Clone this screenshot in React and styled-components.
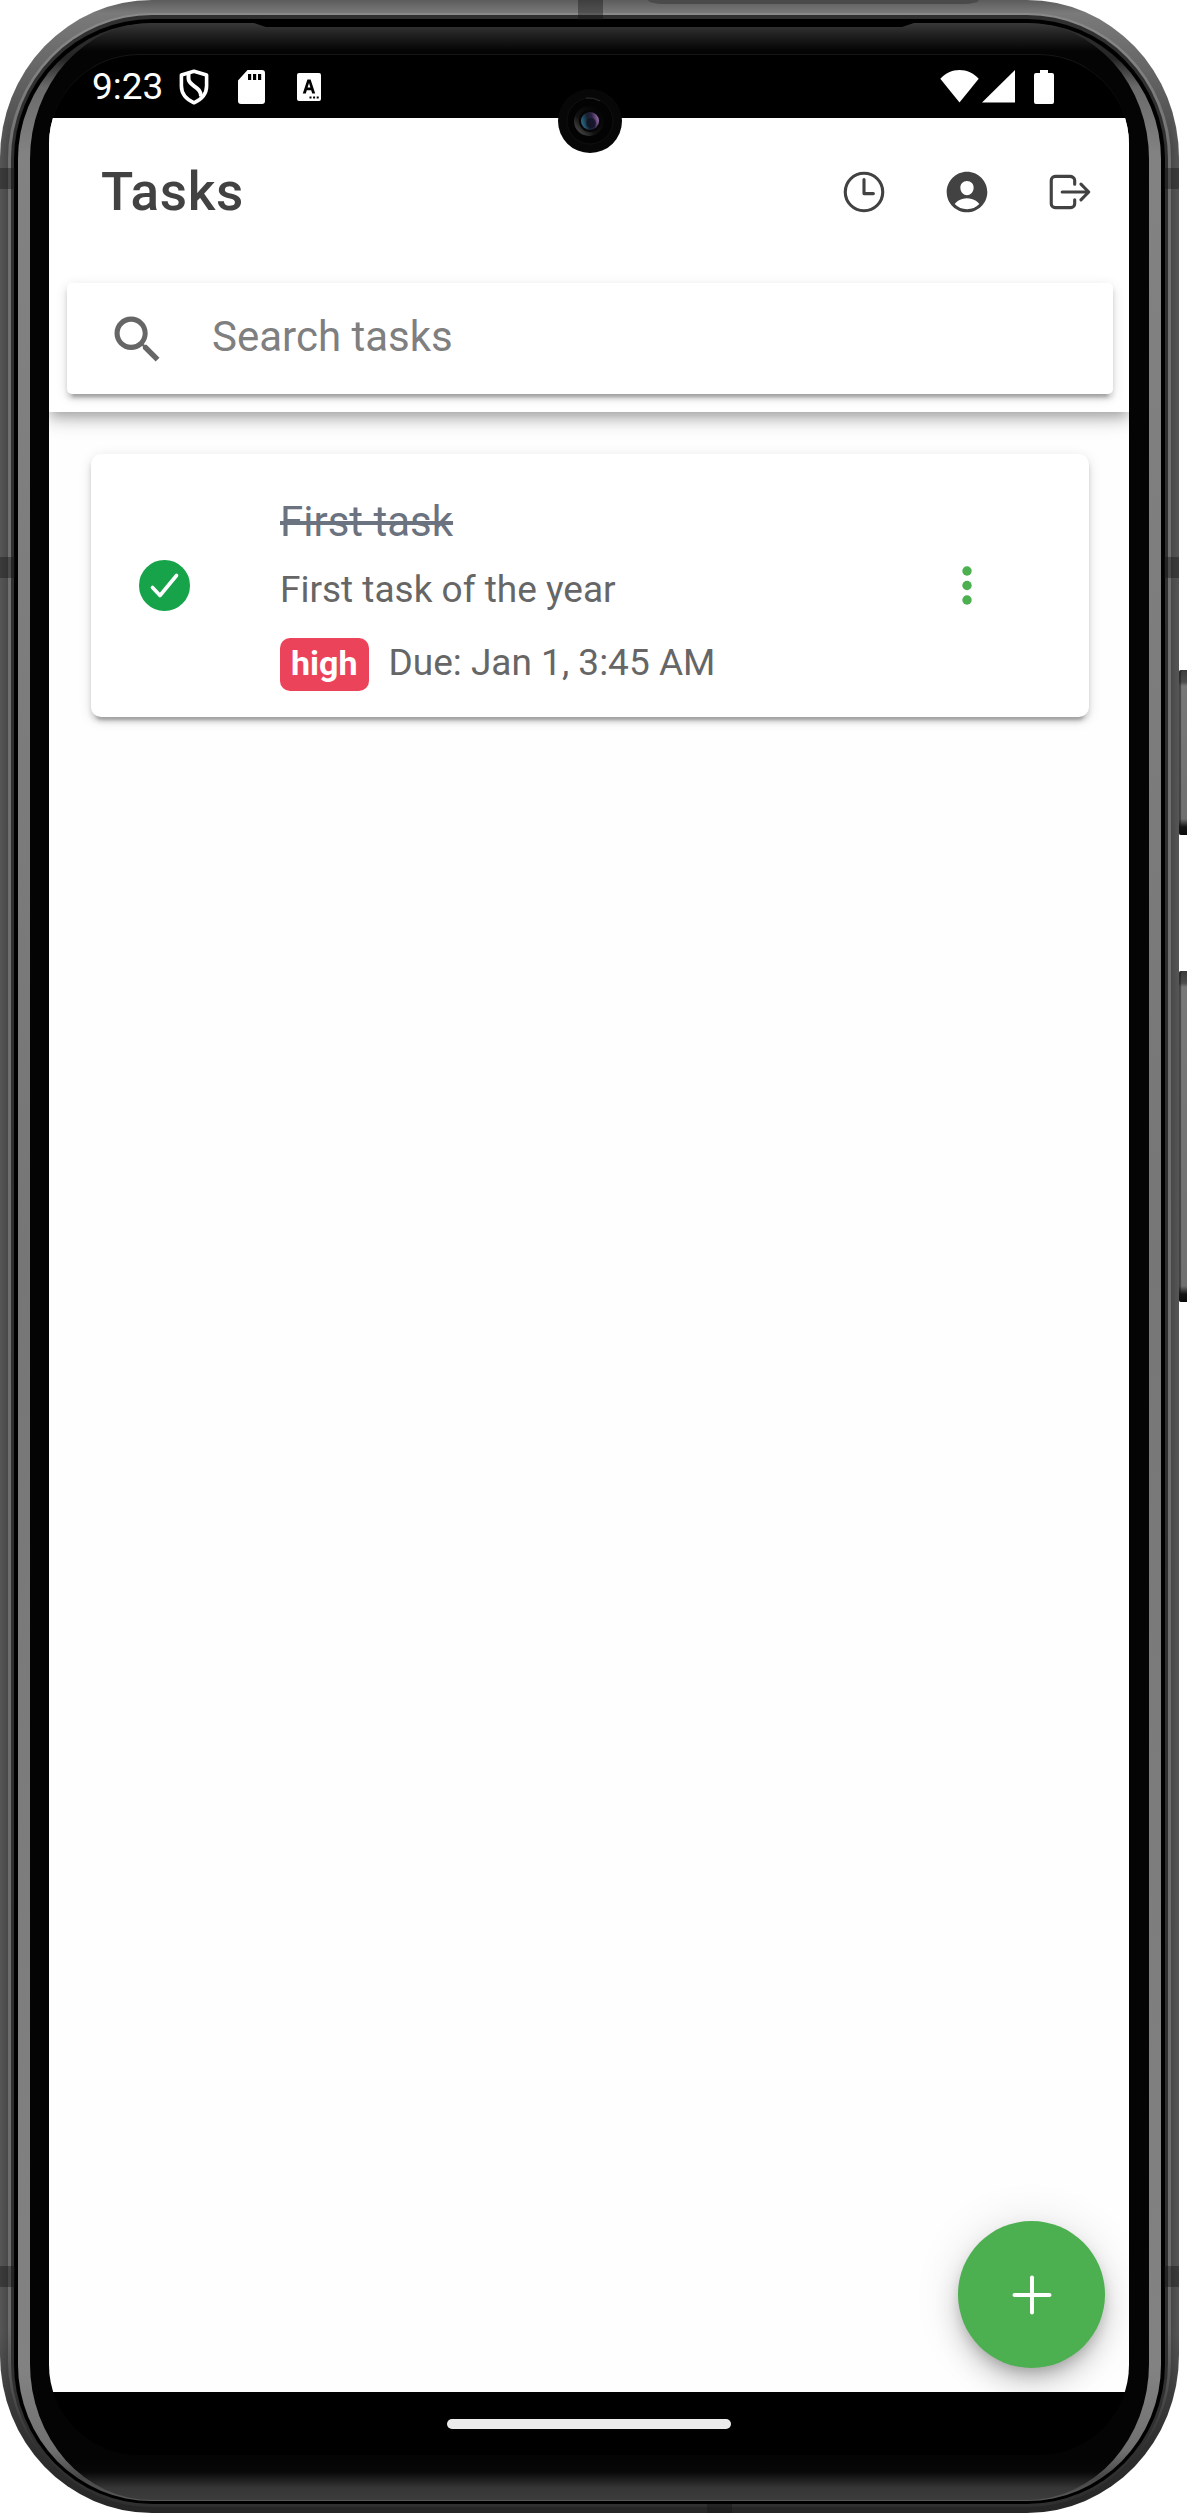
import React, { useState } from "react";
import styled, { createGlobalStyle, css } from "styled-components";
import { IoTimeOutline, IoPersonCircle, IoLogOutOutline } from "react-icons/io5";
import { IoMdSearch } from "react-icons/io";

const GlobalStyle = createGlobalStyle`
  *, *::before, *::after { box-sizing: border-box; }
  body {
    margin: 0;
    background: #fff;
    font-family: Roboto, "Liberation Sans", sans-serif;
  }
  button, input { font: inherit; }
`;

/* ---------- device ---------- */

const Stage = styled.div`
  display: flex;
  min-height: 100vh;
`;

const ring = css`
  display: flex;
  flex-direction: column;
  flex: 1;
`;

const Shell = styled.div`
  ${ring}
  position: relative;
  min-width: 0;
  padding: 13px 8px 6px;
  border-radius: 152px / 158px;
  overflow: hidden;
  background:
    linear-gradient(to bottom, #5c5c5c 0, #7a7a7a 13px, rgba(92, 92, 92, 0) 150px),
    linear-gradient(to top, #262626 0, #2e2e2e 60px, rgba(60, 60, 60, 0) 180px),
    linear-gradient(to right, #565656 0, #484848 8px, #484848 calc(100% - 8px), #565656 100%);
`;

const Highlight = styled.div`
  ${ring}
  padding: 2px 3px 0;
  border-radius: 144px / 146px;
  background: linear-gradient(to bottom, #8a8a8a 0, #707070 150px, #6c6c6c calc(100% - 180px), #2a2a2a calc(100% - 40px));
`;

const Groove = styled.div`
  ${ring}
  padding: 4px 3px 3px;
  border-radius: 141px / 144px;
  background: #303030;
`;

const Seam = styled.div`
  ${ring}
  padding: 4px 4px 3px;
  border-radius: 138px / 140px;
  background: #000;
`;

const Glass = styled.div`
  ${ring}
  padding: 0 12px 1px;
  border-radius: 134px / 136px;
  background: linear-gradient(
    to bottom,
    #303030 0,
    #262626 36px,
    #6a6a6a 64px,
    #828282 130px,
    #767676 50%,
    #828282 calc(100% - 130px),
    #707070 calc(100% - 50px),
    #484848 calc(100% - 24px),
    #585858 100%
  );
`;

const Bezel = styled.div`
  ${ring}
  position: relative;
  padding: 31px 20px 45px 19px;
  border-radius: 122px / 136px;
  background:
    linear-gradient(to bottom, #383838 0, #202020 12px, #040404 28px, rgba(4, 4, 4, 0) 29px),
    linear-gradient(to top, #3c3c3c 0, #363636 12px, #080808 28px, rgba(4, 4, 4, 0) 40px),
    #040404;
`;

const Earpiece = styled.div`
  position: absolute;
  top: 0;
  left: 20%;
  right: 21%;
  height: 4px;
  background: #000;
  clip-path: polygon(0 0, 100% 0, calc(100% - 12px) 100%, 12px 100%);
`;

const TopCap = styled.div`
  position: absolute;
  top: 0;
  left: 55%;
  right: 17%;
  height: 4px;
  border-radius: 0 0 16px 16px / 0 0 4px 4px;
  background: #4a4a4a;
`;

const Display = styled.div`
  ${ring}
  overflow: hidden;
  border-top: 1px solid #161616;
  border-radius: 90px;
  background: #000;
`;

const Band = styled.div`
  position: absolute;
  background: rgba(20, 20, 20, 0.4);
  ${({ $edge, $at }) => {
    if ($edge === "left" || $edge === "right") {
      return css`
        ${$edge}: 0;
        top: ${$at};
        width: 15px;
        height: 21px;
      `;
    }
    return css`
      ${$edge}: 0;
      left: ${$at};
      width: 25px;
      height: ${$edge === "top" ? "20px" : "9px"};
    `;
  }}
`;

const Camera = styled.div`
  position: absolute;
  top: 89px;
  left: 50%;
  display: grid;
  place-items: center;
  width: 64px;
  height: 64px;
  margin-left: -32px;
  border-radius: 50%;
  background: #070707;
`;

const ButtonRail = styled.div`
  display: flex;
  flex-direction: column;
  gap: 136px;
  width: 8px;
  padding-top: 670px;
`;

const SideKey = styled.div`
  height: ${({ $length }) => $length};
  border-radius: 2px 0 0 2px;
  background: linear-gradient(
    to bottom,
    #3c3c3c 0,
    #4c4c4c 12px,
    #787878 16px,
    #707070 calc(100% - 16px),
    #141414 calc(100% - 8px),
    #0a0a0a 100%
  );
  box-shadow: inset 2px 0 1px rgba(20, 20, 20, 0.5);
`;

/* ---------- system bars ---------- */

const StatusBar = styled.div`
  display: flex;
  justify-content: space-between;
  align-items: center;
  height: 63px;
  padding: 0 75px 0 43px;
  color: #fff;
`;

const StatusGroup = styled.div`
  display: flex;
  align-items: center;
`;

const Clock = styled.time`
  width: 87px;
  font-size: 37px;
  line-height: 44px;
`;

const StatusIcon = styled.svg`
  display: block;
  flex: none;
  margin-left: ${({ $gap }) => $gap || "0"};
  fill: currentColor;
`;

const NavBar = styled.div`
  display: flex;
  justify-content: center;
  align-items: center;
  height: 63px;
`;

const HomePill = styled.div`
  width: 284px;
  height: 10px;
  border-radius: 5px;
  background: #ebebeb;
`;

/* ---------- app ---------- */

const AppScreen = styled.div`
  ${ring}
  position: relative;
  background: #fefefe;
`;

const Header = styled.header`
  background: #fff;
  box-shadow:
    0 5px 10px -3px rgba(0, 0, 0, 0.2),
    0 10px 13px 0 rgba(0, 0, 0, 0.14),
    0 3px 26px 0 rgba(0, 0, 0, 0.12);
`;

const Toolbar = styled.div`
  display: flex;
  justify-content: space-between;
  align-items: center;
  height: 147px;
  padding: 0 8px 0 52px;
`;

const PageTitle = styled.h1`
  margin: 0;
  color: #424242;
  font-size: 53px;
  font-weight: 500;
  line-height: 62px;
  letter-spacing: 0.0125em;
`;

const Actions = styled.div`
  display: flex;
`;

const IconButton = styled.button`
  display: flex;
  justify-content: center;
  align-items: center;
  width: ${({ $width }) => $width || "103px"};
  height: 100px;
  padding: 0;
  border: 0;
  background: none;
  color: ${({ $color }) => $color || "#424242"};
  cursor: pointer;
`;

const SearchRow = styled.div`
  padding: 18px 16px 18px 18px;
`;

const SearchBox = styled.label`
  display: flex;
  align-items: center;
  gap: 45px;
  height: 111px;
  padding: 0 40px;
  border-radius: 5px;
  background: #fff;
  color: #666;
  box-shadow:
    0 8px 3px -5px rgba(0, 0, 0, 0.2),
    0 5px 5px 0 rgba(0, 0, 0, 0.14),
    0 3px 13px 0 rgba(0, 0, 0, 0.12);
`;

const SearchInput = styled.input`
  flex: 1;
  min-width: 0;
  padding: 0 0 4px;
  border: 0;
  outline: 0;
  background: none;
  color: #424242;
  font-size: 42px;
  line-height: 50px;
  &::placeholder { color: #7f7f7f; opacity: 1; }
`;

const TaskList = styled.ul`
  flex: 1;
  margin: 0;
  padding: 42px 40px 42px 42px;
  list-style: none;
`;

const TaskCard = styled.li`
  display: flex;
  align-items: center;
  gap: 90px;
  padding: 43px 72px 26px 48px;
  border-radius: 10px;
  background: #fff;
  box-shadow:
    0 8px 3px -5px rgba(0, 0, 0, 0.2),
    0 5px 5px 0 rgba(0, 0, 0, 0.14),
    0 3px 13px 0 rgba(0, 0, 0, 0.12);
`;

const CheckWrap = styled.label`
  display: grid;
  align-self: center;
  margin-bottom: 17px;
  cursor: pointer;
  > * { grid-area: 1 / 1; }
`;

const CheckInput = styled.input`
  appearance: none;
  width: 51px;
  height: 51px;
  margin: 0;
  border: 3px solid #16a34a;
  border-radius: 50%;
  &:checked { background: #16a34a; }
`;

const CheckMark = styled.svg`
  pointer-events: none;
  fill: none;
  stroke: #fff;
  stroke-width: 3.6;
  stroke-linecap: round;
  stroke-linejoin: round;
`;

const TaskBody = styled.div`
  flex: 1;
  min-width: 0;
`;

const TaskTitle = styled.h2`
  margin: 0 0 18px;
  color: #6b7280;
  font-size: 42px;
  font-weight: 400;
  line-height: 50px;
  text-decoration: ${({ $done }) => ($done ? "line-through" : "none")};
`;

const TaskNote = styled.p`
  margin: 0 0 23px;
  color: #666;
  font-size: 37px;
  line-height: 50px;
`;

const TaskMeta = styled.div`
  display: flex;
  align-items: baseline;
  gap: 20px;
  color: #666;
  font-size: 37px;
  line-height: 46px;
`;

const Badge = styled.span`
  padding: 6px 11px 9px;
  border-radius: 10px;
  background: #eb445a;
  color: #fff;
  font-size: 34px;
  font-weight: 700;
  line-height: 38px;
`;

const MenuWrap = styled.div`
  margin-bottom: 17px;
`;

const Fab = styled.button`
  position: absolute;
  right: 24px;
  bottom: 24px;
  display: flex;
  justify-content: center;
  align-items: center;
  width: 147px;
  height: 147px;
  padding: 0;
  border: 0;
  border-radius: 50%;
  background: #4caf50;
  box-shadow:
    0 8px 13px -3px rgba(0, 0, 0, 0.2),
    0 16px 26px 0 rgba(0, 0, 0, 0.14),
    0 3px 47px 0 rgba(0, 0, 0, 0.12);
  cursor: pointer;
`;

function CameraLens() {
  return (
    <svg width="64" height="64" viewBox="0 0 64 64" aria-hidden="true">
      <defs>
        <linearGradient id="rim" x1="0.1" y1="0.9" x2="0.8" y2="0.2">
          <stop offset="0" stopColor="#4a4a4a" />
          <stop offset="0.4" stopColor="#111" />
          <stop offset="1" stopColor="#050505" />
        </linearGradient>
        <linearGradient id="iris" x1="0" y1="0.6" x2="1" y2="0.35">
          <stop offset="0" stopColor="#2c6f8c" />
          <stop offset="0.4" stopColor="#15202f" />
          <stop offset="0.65" stopColor="#2a2140" />
          <stop offset="1" stopColor="#a071b4" />
        </linearGradient>
      </defs>
      <circle cx="32" cy="32" r="23" fill="#030303" stroke="#101010" />
      <path d="M28 9a23 23 0 0 1 14 3" fill="none" stroke="#2c2c2c" />
      <circle cx="31" cy="32" r="15" fill="url(#rim)" />
      <circle cx="32" cy="32" r="11" fill="#060606" />
      <circle cx="32" cy="32" r="9" fill="url(#iris)" />
      <circle cx="33" cy="34" r="5" fill="#101222" opacity="0.7" />
    </svg>
  );
}

function StatusIcons() {
  return (
    <>
      <StatusIcon width="30" height="36" viewBox="0 0 30 36" aria-hidden="true">
        <path
          d="M15 2.2 27.6 6v11c0 8-5 13.4-12.6 16.8C7.4 30.4 2.4 25 2.4 17V6Z"
          fill="none"
          stroke="currentColor"
          strokeWidth="3.6"
          strokeLinejoin="round"
        />
        <path
          d="M9.500 4v5.500c0 8 12.500 7.500 12.500 18"
          fill="none"
          stroke="currentColor"
          strokeWidth="4"
        />
      </StatusIcon>
      <StatusIcon $gap="29px" width="27" height="34" viewBox="0 0 27 34" aria-hidden="true">
        <path
          fillRule="evenodd"
          d="M9.5 0H24a3 3 0 0 1 3 3v28a3 3 0 0 1-3 3H3a3 3 0 0 1-3-3V10.5ZM10 4v6h3.200V4Zm5 0v6h3.200V4Zm5 0v6h3.200V4Z"
        />
      </StatusIcon>
      <StatusIcon $gap="32px" width="24" height="28" viewBox="0 0 24 28" aria-hidden="true">
        <path
          fillRule="evenodd"
          d="M2 0h20a2 2 0 0 1 2 2v24a2 2 0 0 1-2 2H2a2 2 0 0 1-2-2V2a2 2 0 0 1 2-2ZM10.4 6.5 5.8 20.5h3l1-3.300h4.400l1 3.300h3L13.6 6.500Zm0.200 8L12 10l1.400 4.500ZM12.500 23.500v2h2v-2Zm3.600 0v2h2v-2Zm3.600 0v2h2v-2Z"
        />
      </StatusIcon>
    </>
  );
}

function SignalIcons() {
  return (
    <>
      <StatusIcon width="39" height="33" viewBox="0 0 39 33" aria-hidden="true">
        <path d="M19.5 32.5 0.3 8.8C5.5 3 12 0 19.5 0s14 3 19.2 8.8Z" />
      </StatusIcon>
      <StatusIcon $gap="3px" width="33" height="33" viewBox="0 0 33 33" aria-hidden="true">
        <path d="M33 0v32.5H0Z" />
      </StatusIcon>
      <StatusIcon $gap="19px" width="20" height="34" viewBox="0 0 20 34" aria-hidden="true">
        <path d="M6 0h8v3h4a2 2 0 0 1 2 2v27a2 2 0 0 1-2 2H2a2 2 0 0 1-2-2V5a2 2 0 0 1 2-2h4Z" />
      </StatusIcon>
    </>
  );
}

const TASKS = [
  {
    id: 1,
    title: "First task",
    note: "First task of the year",
    priority: "high",
    due: "Due: Jan 1, 3:45 AM",
    done: true,
  },
];

function Task({ task }) {
  const [done, setDone] = useState(task.done);
  return (
    <TaskCard>
      <CheckWrap>
        <CheckInput
          type="checkbox"
          aria-label={task.title}
          checked={done}
          onChange={(e) => setDone(e.target.checked)}
        />
        <CheckMark width="51" height="51" viewBox="0 0 51 51" aria-hidden="true">
          <path d="M13.500 27.500 21 35.500 37.500 15.500" />
        </CheckMark>
      </CheckWrap>
      <TaskBody>
        <TaskTitle $done={done}>{task.title}</TaskTitle>
        <TaskNote>{task.note}</TaskNote>
        <TaskMeta>
          <Badge>{task.priority}</Badge>
          <span>{task.due}</span>
        </TaskMeta>
      </TaskBody>
      <MenuWrap>
        <IconButton type="button" $width="100px" $color="#4caf50" aria-label="Task options">
          <svg width="10" height="39" viewBox="0 0 10 39" fill="currentColor" aria-hidden="true">
            <circle cx="5" cy="5" r="4.7" />
            <circle cx="5" cy="19.5" r="4.7" />
            <circle cx="5" cy="34" r="4.7" />
          </svg>
        </IconButton>
      </MenuWrap>
    </TaskCard>
  );
}

export default function App() {
  return (
    <>
      <GlobalStyle />
      <Stage>
        <Shell>
          <Highlight>
            <Groove>
              <Seam>
                <Glass>
                  <Bezel>
                    <Earpiece />
                    <Display>
                      <StatusBar>
                        <StatusGroup>
                          <Clock>9:23</Clock>
                          <StatusIcons />
                        </StatusGroup>
                        <StatusGroup>
                          <SignalIcons />
                        </StatusGroup>
                      </StatusBar>
                      <AppScreen>
                        <Header>
                          <Toolbar>
                            <PageTitle>Tasks</PageTitle>
                            <Actions>
                              <IconButton type="button" aria-label="History">
                                <IoTimeOutline size={50} />
                              </IconButton>
                              <IconButton type="button" aria-label="Account">
                                <IoPersonCircle size={50} />
                              </IconButton>
                              <IconButton type="button" aria-label="Log out">
                                <IoLogOutOutline size={50} />
                              </IconButton>
                            </Actions>
                          </Toolbar>
                          <SearchRow>
                            <SearchBox>
                              <IoMdSearch size={60} />
                              <SearchInput type="text" placeholder="Search tasks" aria-label="Search tasks" />
                            </SearchBox>
                          </SearchRow>
                        </Header>
                        <TaskList>
                          {TASKS.map((task) => (
                            <Task key={task.id} task={task} />
                          ))}
                        </TaskList>
                        <Fab type="button" aria-label="Add task">
                          <svg width="40" height="40" viewBox="0 0 40 40" aria-hidden="true">
                            <path d="M20 2.5v35M2.5 20h35" stroke="#fff" strokeWidth="4" strokeLinecap="round" />
                          </svg>
                        </Fab>
                      </AppScreen>
                      <NavBar>
                        <HomePill />
                      </NavBar>
                    </Display>
                  </Bezel>
                </Glass>
              </Seam>
            </Groove>
          </Highlight>
          <TopCap />
          <Band $edge="left" $at="168px" />
          <Band $edge="right" $at="168px" />
          <Band $edge="left" $at="557px" />
          <Band $edge="right" $at="557px" />
          <Band $edge="left" $at="calc(100% - 247px)" />
          <Band $edge="right" $at="calc(100% - 247px)" />
          <Band $edge="top" $at="49%" />
          <Band $edge="bottom" $at="60%" />
          <Camera>
            <CameraLens />
          </Camera>
        </Shell>
        <ButtonRail>
          <SideKey $length="165px" />
          <SideKey $length="331px" />
        </ButtonRail>
      </Stage>
    </>
  );
}
